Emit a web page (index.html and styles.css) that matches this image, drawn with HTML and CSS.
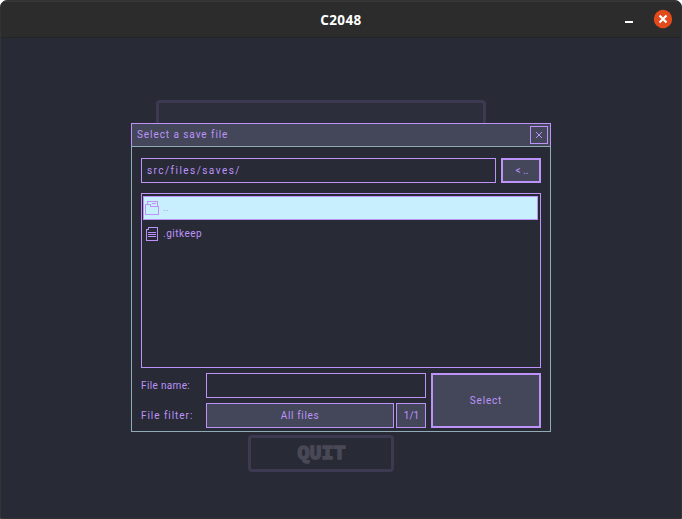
FILE: index.html
```html
<!DOCTYPE html>
<html lang="en">
<head>
<meta charset="utf-8">
<title>C2048</title>
<link rel="stylesheet" href="styles.css">
</head>
<body>
<div class="window">
  <header class="titlebar">
    <h1>C2048</h1>
    <div class="controls">
      <span class="minimize"></span>
      <svg class="close" viewBox="0 0 18 18"><circle cx="9" cy="9" r="9.200" fill="#e2491b"/><path d="M5.500 5.500l7 7M12.500 5.500l-7 7" stroke="#fff" stroke-width="2.2"/></svg>
    </div>
  </header>
  <main class="game">
    <div class="panel"></div>
    <button class="quit">QUIT</button>
    <section class="dialog">
      <div class="dialog-head">
        <span class="t-title">Select a save file</span>
        <button class="dismiss"><svg width="6" height="6" viewBox="0 0 6 6" shape-rendering="crispEdges"><path fill="#bd93f9" d="M0 0h1v1H0zM5 0h1v1H5zM1 1h1v1H1zM4 1h1v1H4zM2 2h2v2H2zM1 4h1v1H1zM4 4h1v1H4zM0 5h1v1H0zM5 5h1v1H5z"/></svg></button>
      </div>
      <div class="dialog-body">
        <div class="path-row">
          <div class="field path"><span class="t-path">src/files/saves/</span></div>
          <button class="btn thick"><span class="t-back">&lt; ..</span></button>
        </div>
        <div class="list">
          <div class="item selected">
            <svg width="16" height="16" viewBox="0 0 16 16" fill="#bd93f9" shape-rendering="crispEdges"><path d="M1 4h5v1H1zM1 5h1v9H1zM1 14h14v1H1zM14 6h1v8h-1zM6 6h8v1H6zM6 4h1v2H6zM3 1h11v1H3zM3 2h1v2H3zM13 2h1v4h-1zM8 3h4v1H8z"/></svg>
            <span class="t-up">..</span>
          </div>
          <div class="item">
            <svg width="16" height="16" viewBox="0 0 16 16" fill="#bd93f9" shape-rendering="crispEdges"><path d="M4 1h10v1H4zM4 2h1v2H4zM2 3h2v1H2zM2 4h1v10H2zM2 14h12v1H2zM13 2h1v12h-1zM4 6h8v1H4zM4 8h8v1H4zM4 10h8v1H4z"/></svg>
            <span class="t-keep">.gitkeep</span>
          </div>
        </div>
        <div class="form">
          <label class="t-name">File name:</label>
          <div class="field"></div>
          <label class="t-filter">File filter:</label>
          <div class="filters">
            <button class="btn"><span class="t-all">All files</span></button>
            <button class="btn"><span class="t-count">1/1</span></button>
          </div>
          <button class="btn thick select"><span class="t-select">Select</span></button>
        </div>
      </div>
    </section>
  </main>
</div>
</body>
</html>
```
FILE: styles.css
```css
* { box-sizing: border-box; }
body { margin: 0; background: #fff; }
button { margin: 0; padding: 0; font: inherit; color: inherit; }
svg { display: block; }
.window {
  width: 682px;
  height: 519px;
  overflow: hidden;
  border: 1px solid #333;
  border-radius: 7px 7px 0 0;
  background: #282a36;
}
.titlebar {
  position: relative;
  height: 37px;
  background: #2c2c2c;
  border-bottom: 1px solid #242424;
  box-shadow: inset 0 1px #383838;
}
.titlebar h1 {
  margin: 0;
  text-align: center;
  color: #fff;
  font: bold 13.5px/38px "Open Sans", "Noto Sans", sans-serif;
  letter-spacing: 0.4px;
}
.controls {
  position: absolute;
  top: 9px;
  right: 9px;
  display: flex;
  gap: 21px;
}
.minimize { width: 8px; height: 2px; margin-top: 11px; background: #fff; }
.close { width: 18px; height: 18px; overflow: visible; }
.game {
  position: relative;
  height: 480px;
  color: #bd93f9;
  font: 10px/12px Roboto, sans-serif;
}
.panel {
  position: absolute;
  left: 155px;
  top: 62px;
  width: 330px;
  height: 100px;
  border: 3px solid #3d3951;
  border-radius: 4px;
  background: #2d2e3b;
}
.quit {
  position: absolute;
  left: 247px;
  top: 397px;
  width: 146px;
  height: 37px;
  padding-left: 1px;
  border: 3px solid #3d3951;
  border-radius: 4px;
  background: #282a36;
  color: #494856;
  font: bold 20px/30px "Liberation Mono", monospace;
  -webkit-text-stroke: 1.5px #494856;
}
.dialog {
  position: absolute;
  left: 130px;
  top: 85px;
  width: 420px;
  height: 309px;
  border: 1px solid #90abb5;
  background: #282a36;
}
.dialog-head {
  display: flex;
  align-items: center;
  justify-content: space-between;
  height: 24px;
  margin: -1px -1px 0;
  padding: 0 2px 0 5px;
  border: 1px solid #bd93f9;
  border-bottom-color: #90abb5;
  background: #44475a;
}
.dismiss {
  display: grid;
  place-items: center;
  width: 18px;
  height: 18px;
  border: 1px solid #bd93f9;
  background: #44475a;
}
.dialog-body { padding: 11px 9px 0; }
.path-row { display: grid; grid-template-columns: 355px 40px; gap: 5px; height: 25px; }
.field { display: flex; align-items: center; border: 1px solid #bd93f9; }
.path { padding-left: 5px; }
.btn {
  display: flex;
  align-items: center;
  justify-content: center;
  border: 1px solid #bd93f9;
  background: #44475a;
}
.thick { border-width: 2px; }
.list {
  height: 175px;
  margin-top: 10px;
  padding: 2px 2px 0 1px;
  border: 1px solid #bd93f9;
}
.item {
  display: flex;
  align-items: center;
  gap: 3px;
  height: 24px;
  margin-bottom: 2px;
  border: 1px solid transparent;
}
.selected { border-color: #bd93f9; background: #c7effe; }
.form {
  display: grid;
  grid-template: 25px 25px / 65px 220px 110px;
  row-gap: 5px;
  align-items: stretch;
  margin-top: 5px;
}
.form label { align-self: center; }
.filters { display: grid; grid-template-columns: 188px 30px; gap: 2px; }
.select { grid-area: 1 / 3 / 3 / 4; margin-left: 5px; width: 110px; }
.dialog span, .dialog label { white-space: pre; }
.t-title { letter-spacing: 0.93px; }
.t-path { letter-spacing: 1.45px; }
.t-back { padding-left: 2px; }
.t-keep { letter-spacing: 0.5px; }
.t-name { letter-spacing: 0.35px; }
.t-filter { letter-spacing: 0.95px; }
.t-all { letter-spacing: 0.65px; }
.t-count { padding-left: 1px; }
.t-select { letter-spacing: 0.8px; }
```
